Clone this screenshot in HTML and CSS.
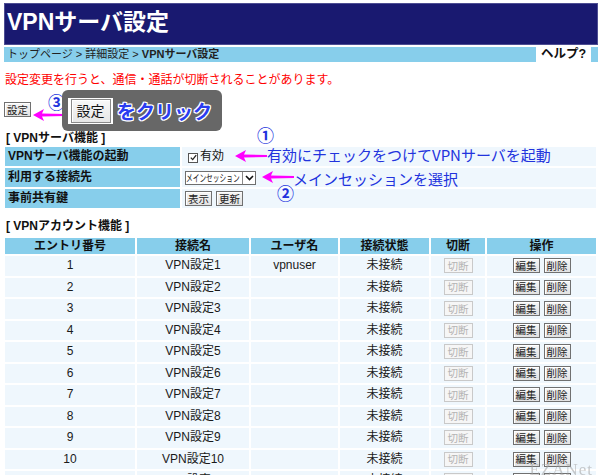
FILE: index.html
```html
<!DOCTYPE html>
<html lang="ja">
<head>
<meta charset="utf-8">
<title>VPNサーバ設定</title>
<link rel="stylesheet" href="styles.css">
</head>
<body>
<div class="page">
  <header class="title-bar"><h1 class="title">VPNサーバ設定</h1></header>
  <nav class="crumbs">
    <span class="crumb-path">トップページ &gt; 詳細設定 &gt; <b>VPNサーバ設定</b></span>
    <span class="help">ヘルプ?</span>
  </nav>
  <p class="warning">設定変更を行うと、通信・通話が切断されることがあります。</p>

  <div class="action-row">
    <button class="btn">設定</button>
    <span class="num num-3">③</span>
    <svg class="arrow arrow-3" width="32" height="12" viewBox="0 0 32 12"><polygon points="0,6 11,0 9,4.6 32,5 32,7 9,7.4 11,12"/></svg>
    <div class="callout">
      <span class="callout-btn-wrap"><span class="callout-btn">設定</span></span>
      <span class="callout-text">をクリック</span>
    </div>
  </div>

  <h2 class="section">[ VPNサーバ機能 ]</h2>
  <div class="settings-wrap">
    <table class="settings">
      <tr>
        <th>VPNサーバ機能の起動</th>
        <td><span class="check"><svg width="7" height="7" viewBox="0 0 7 7"><polyline points="0.8,3.6 2.7,5.6 6.2,1.2"/></svg></span><span class="check-label">有効</span></td>
      </tr>
      <tr>
        <th>利用する接続先</th>
        <td><span class="select"><span class="select-text"><span class="select-inner">メインセッション</span></span><span class="select-arrow"><svg width="9" height="6" viewBox="0 0 9 6"><polyline points="1,1 4.5,4.5 8,1"/></svg></span></span></td>
      </tr>
      <tr>
        <th>事前共有鍵</th>
        <td><span class="btn-group"><button class="btn">表示</button><button class="btn">更新</button></span></td>
      </tr>
    </table>
    <span class="num num-1">①</span>
    <svg class="arrow arrow-1" width="32" height="12" viewBox="0 0 32 12"><polygon points="0,6 11,0 9,4.6 32,5 32,7 9,7.4 11,12"/></svg>
    <span class="note note-1">有効にチェックをつけてVPNサーバを起動</span>
    <svg class="arrow arrow-2" width="32" height="12" viewBox="0 0 32 12"><polygon points="0,6 11,0 9,4.6 32,5 32,7 9,7.4 11,12"/></svg>
    <span class="note note-2">メインセッションを選択</span>
    <span class="num num-2">②</span>
  </div>

  <h2 class="section section-2">[ VPNアカウント機能 ]</h2>
  <table class="accounts">
    <colgroup>
      <col class="c-no"><col class="c-name"><col class="c-user"><col class="c-state"><col class="c-cut"><col class="c-op">
    </colgroup>
    <tr><th>エントリ番号</th><th>接続名</th><th>ユーザ名</th><th>接続状態</th><th>切断</th><th>操作</th></tr>
    <tr><td>1</td><td>VPN設定1</td><td>vpnuser</td><td>未接続</td><td><button class="btn btn-off">切断</button></td><td><span class="btn-group"><button class="btn">編集</button><button class="btn">削除</button></span></td></tr>
    <tr><td>2</td><td>VPN設定2</td><td></td><td>未接続</td><td><button class="btn btn-off">切断</button></td><td><span class="btn-group"><button class="btn">編集</button><button class="btn">削除</button></span></td></tr>
    <tr><td>3</td><td>VPN設定3</td><td></td><td>未接続</td><td><button class="btn btn-off">切断</button></td><td><span class="btn-group"><button class="btn">編集</button><button class="btn">削除</button></span></td></tr>
    <tr><td>4</td><td>VPN設定4</td><td></td><td>未接続</td><td><button class="btn btn-off">切断</button></td><td><span class="btn-group"><button class="btn">編集</button><button class="btn">削除</button></span></td></tr>
    <tr><td>5</td><td>VPN設定5</td><td></td><td>未接続</td><td><button class="btn btn-off">切断</button></td><td><span class="btn-group"><button class="btn">編集</button><button class="btn">削除</button></span></td></tr>
    <tr><td>6</td><td>VPN設定6</td><td></td><td>未接続</td><td><button class="btn btn-off">切断</button></td><td><span class="btn-group"><button class="btn">編集</button><button class="btn">削除</button></span></td></tr>
    <tr><td>7</td><td>VPN設定7</td><td></td><td>未接続</td><td><button class="btn btn-off">切断</button></td><td><span class="btn-group"><button class="btn">編集</button><button class="btn">削除</button></span></td></tr>
    <tr><td>8</td><td>VPN設定8</td><td></td><td>未接続</td><td><button class="btn btn-off">切断</button></td><td><span class="btn-group"><button class="btn">編集</button><button class="btn">削除</button></span></td></tr>
    <tr><td>9</td><td>VPN設定9</td><td></td><td>未接続</td><td><button class="btn btn-off">切断</button></td><td><span class="btn-group"><button class="btn">編集</button><button class="btn">削除</button></span></td></tr>
    <tr><td>10</td><td>VPN設定10</td><td></td><td>未接続</td><td><button class="btn btn-off">切断</button></td><td><span class="btn-group"><button class="btn">編集</button><button class="btn">削除</button></span></td></tr>
    <tr><td>11</td><td>VPN設定11</td><td></td><td>未接続</td><td><button class="btn btn-off">切断</button></td><td><span class="btn-group"><button class="btn">編集</button><button class="btn">削除</button></span></td></tr>
    <tr><td>12</td><td>VPN設定12</td><td></td><td>未接続</td><td><button class="btn btn-off">切断</button></td><td><span class="btn-group"><button class="btn">編集</button><button class="btn">削除</button></span></td></tr>
  </table>
</div>
<div class="watermark">EZANet</div>
</body>
</html>
```

FILE: styles.css
```css
html, body {
  margin: 0;
  padding: 0;
  background: #ffffff;
}

body {
  font-family: "Liberation Sans", "Noto Sans CJK JP", sans-serif;
  font-size: 12px;
  color: #111111;
}

.page {
  padding: 3px 2px 0 3px;
}

.title-bar {
  margin: 0 0 0 1px;
  height: 40px;
  background: #191970;
  border: 1px solid #4d4d92;
}

.title {
  margin: 0;
  padding-left: 2px;
  font-size: 23px;
  font-weight: bold;
  line-height: 36px;
  color: #ffffff;
}

.crumbs {
  display: flex;
  align-items: center;
  justify-content: space-between;
  margin: 2px 0 0 1px;
  height: 15px;
  background: #87ceeb;
}

.crumb-path {
  padding-left: 3px;
  font-size: 11px;
  line-height: 15px;
  color: #222222;
}

.help {
  width: 55px;
  margin-right: 7px;
  height: 15px;
  background: #ffffff;
  font-size: 12.5px;
  font-weight: bold;
  line-height: 15px;
  text-align: center;
  color: #111111;
}

.warning {
  margin: 10px 0 0 2px;
  font-size: 12px;
  line-height: 16px;
  color: #ff0000;
}

.action-row {
  position: relative;
  margin: 14px 0 0 1px;
  height: 15px;
}

.btn {
  display: inline-block;
  box-sizing: border-box;
  height: 15px;
  margin: 0;
  padding: 0 2px;
  font-family: "Liberation Sans", "Noto Sans CJK JP", sans-serif;
  font-size: 10.5px;
  line-height: 12px;
  color: #222222;
  background: linear-gradient(#f6f6f6, #e2e2e2);
  border: 1px solid #707070;
  box-shadow: inset 1px 1px 0 #ffffff;
  vertical-align: middle;
  cursor: default;
}

.btn-off {
  color: #b4b4b4;
  border-color: #c9c9c9;
  background: #f6f6f6;
  box-shadow: none;
  padding: 0 3px;
}

.btn-group {
  display: inline-flex;
  gap: 4px;
  vertical-align: middle;
}

.num {
  position: absolute;
  font-family: "Noto Sans CJK JP", sans-serif;
  font-size: 17px;
  font-weight: bold;
  line-height: 17px;
  color: #2233dd;
}

.arrow {
  position: absolute;
  fill: #ff00ff;
}

.num-3 {
  left: 44px;
  top: -9px;
}

.arrow-3 {
  left: 29px;
  top: 7px;
}

.callout {
  position: absolute;
  left: 58px;
  top: -12px;
  width: 160px;
  height: 41px;
  box-sizing: border-box;
  padding-left: 6px;
  display: flex;
  align-items: center;
  background: #676767;
  border-radius: 6px;
}

.callout-btn-wrap {
  display: flex;
  align-items: center;
  justify-content: center;
  width: 45px;
  height: 26px;
  background: #ffffff;
}

.callout-btn {
  box-sizing: border-box;
  width: 40px;
  height: 24px;
  border: 1px solid #8a8a8a;
  background: linear-gradient(#f8f8f8, #e6e6e6);
  box-shadow: inset 1px 1px 0 #ffffff;
  font-size: 14px;
  line-height: 22px;
  text-align: center;
  color: #111111;
}

.callout-text {
  margin-left: 4px;
  font-family: "Noto Sans CJK JP", sans-serif;
  font-size: 19px;
  font-weight: bold;
  color: #2a3cf0;
  text-shadow: 1px 0 0 #fff, -1px 0 0 #fff, 0 1px 0 #fff, 0 -1px 0 #fff,
    1px 1px 0 #fff, -1px -1px 0 #fff, 1px -1px 0 #fff, -1px 1px 0 #fff;
}

.section {
  margin: 14px 0 0 3px;
  font-size: 12px;
  font-weight: bold;
  line-height: 15px;
  color: #111111;
}

.section-2 {
  margin-top: 8px;
  line-height: 16px;
}

.settings-wrap {
  position: relative;
}

.settings {
  width: 595px;
  margin-top: -1px;
  border-collapse: separate;
  border-spacing: 2px;
}

.settings th,
.settings td {
  height: 19px;
  padding: 0 0 0 3px;
  font-size: 12px;
  line-height: 15px;
  vertical-align: middle;
}

.settings th {
  width: 172px;
  text-align: left;
  font-weight: bold;
  background: #87ceeb;
  color: #111111;
}

.settings td {
  background: #eff7fd;
}

.check {
  display: inline-flex;
  align-items: center;
  justify-content: center;
  box-sizing: border-box;
  width: 10px;
  height: 10px;
  margin-left: 3px;
  border: 1px solid #555555;
  background: #ffffff;
  vertical-align: -1px;
}

.check svg {
  fill: none;
  stroke: #222222;
  stroke-width: 1.3;
}

.check-label {
  margin-left: 2px;
  font-size: 12px;
}

.select {
  display: inline-flex;
  box-sizing: border-box;
  width: 71px;
  height: 14px;
  border: 1px solid #6e6e6e;
  background: #ffffff;
  vertical-align: middle;
}

.select-text {
  width: 56px;
  white-space: nowrap;
  line-height: 12px;
}

.select-inner {
  display: inline-block;
  margin-right: -27px;
  font-family: "Noto Sans CJK JP", sans-serif;
  font-size: 10px;
  line-height: 12px;
  transform: scaleX(0.67);
  transform-origin: left center;
  color: #222222;
}

.select-arrow {
  display: flex;
  align-items: center;
  justify-content: center;
  flex: 1;
  border-left: 1px solid #8a8a8a;
}

.select-arrow svg {
  fill: none;
  stroke: #111111;
  stroke-width: 1.6;
}

.note {
  position: absolute;
  font-family: "Noto Sans CJK JP", sans-serif;
  font-size: 15px;
  line-height: 18px;
  color: #2233dd;
  white-space: nowrap;
}

.num-1 {
  left: 254px;
  top: -19px;
}

.arrow-1 {
  left: 232px;
  top: 5px;
}

.note-1 {
  left: 264px;
  top: 1px;
}

.arrow-2 {
  left: 259px;
  top: 26px;
}

.note-2 {
  left: 290px;
  top: 25px;
}

.num-2 {
  left: 274px;
  top: 39px;
}

.accounts {
  width: 595px;
  margin-top: 2px;
  border-collapse: separate;
  border-spacing: 2px;
  table-layout: fixed;
}

.c-no { width: 130px; }
.c-name { width: 112px; }
.c-user { width: 87px; }
.c-state { width: 89px; }
.c-cut { width: 54px; }
.c-op { width: 109px; }

.accounts th,
.accounts td {
  padding: 0;
  text-align: center;
  vertical-align: middle;
  font-size: 12px;
  white-space: nowrap;
}

.accounts th {
  height: 16px;
  line-height: 14px;
  font-weight: bold;
  background: #87ceeb;
  color: #111111;
}

.accounts td {
  height: 19.5px;
  line-height: 15px;
  background: #eff7fd;
  color: #1a1a1a;
}

.watermark {
  position: fixed;
  right: 7px;
  bottom: -5px;
  font-family: "Liberation Serif", serif;
  font-size: 17px;
  letter-spacing: 1px;
  color: rgba(160, 160, 160, 0.55);
}
```
